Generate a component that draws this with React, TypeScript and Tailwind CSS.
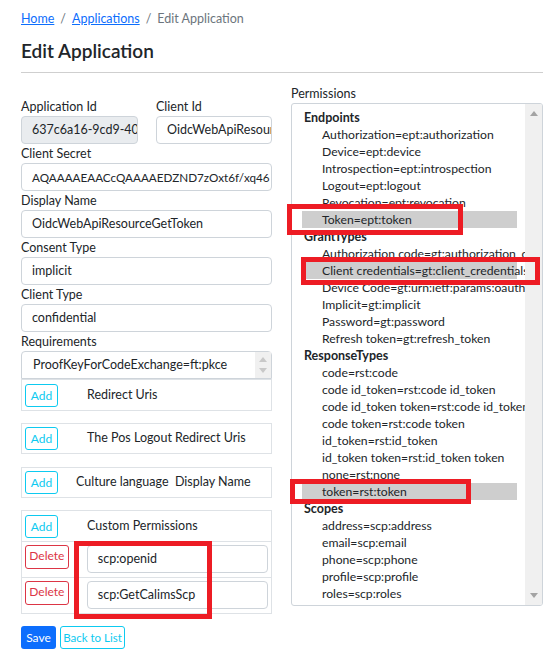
import React from "react";

const permissions: { group: string; items: { text: string; sel?: boolean }[] }[] = [
  {
    group: "Endpoints",
    items: [
      { text: "Authorization=ept:authorization" },
      { text: "Device=ept:device" },
      { text: "Introspection=ept:introspection" },
      { text: "Logout=ept:logout" },
      { text: "Revocation=ept:revocation" },
      { text: "Token=ept:token", sel: true },
    ],
  },
  {
    group: "GrantTypes",
    items: [
      { text: "Authorization code=gt:authorization_code" },
      { text: "Client credentials=gt:client_credentials", sel: true },
      { text: "Device Code=gt:urn:ietf:params:oauth:grant-type:device_code" },
      { text: "Implicit=gt:implicit" },
      { text: "Password=gt:password" },
      { text: "Refresh token=gt:refresh_token" },
    ],
  },
  {
    group: "ResponseTypes",
    items: [
      { text: "code=rst:code" },
      { text: "code id_token=rst:code id_token" },
      { text: "code id_token token=rst:code id_token token" },
      { text: "code token=rst:code token" },
      { text: "id_token=rst:id_token" },
      { text: "id_token token=rst:id_token token" },
      { text: "none=rst:none" },
      { text: "token=rst:token", sel: true },
    ],
  },
  {
    group: "Scopes",
    items: [
      { text: "address=scp:address" },
      { text: "email=scp:email" },
      { text: "phone=scp:phone" },
      { text: "profile=scp:profile" },
      { text: "roles=scp:roles" },
    ],
  },
];

function Field({ label, value, disabled, className, small }: { label: string; value: string; disabled?: boolean; className?: string; small?: boolean }) {
  return (
    <div className={className}>
      <div className="h-[19px] leading-[19px]">{label}</div>
      <div
        className={
          "h-[28px] border border-[#ced4da] rounded-[4px] pl-[10px] leading-[26px] overflow-hidden whitespace-nowrap " +
          (disabled ? "bg-[#e9ecef] " : "bg-white ") +
          (small ? "text-[11.7px]" : "")
        }
      >
        {value}
      </div>
    </div>
  );
}

function AddBtn() {
  return (
    <div className="w-[33px] h-[23px] border border-[#0dcaf0] rounded-[3px] text-[#0dcaf0] text-[12px] leading-[21px] text-center">
      Add
    </div>
  );
}

function DelBtn() {
  return (
    <div className="w-[44px] h-[24px] border border-[#dc3545] rounded-[3px] text-[#dc3545] text-[12px] leading-[20px] text-center">
      Delete
    </div>
  );
}

function Tri({ up, color }: { up?: boolean; color: string }) {
  return (
    <svg width="8" height="5" viewBox="0 0 8 5">
      <path d={up ? "M0 5 L4 0 L8 5 Z" : "M0 0 L8 0 L4 5 Z"} fill={color} />
    </svg>
  );
}

export default function App() {
  return (
    <div className="relative w-[543px] h-[652px] overflow-hidden bg-white text-[#212529] text-[12.5px] font-['Segoe_UI','Lato',sans-serif]">
      <div className="pl-[21px] pt-[10px]">
        {/* breadcrumb */}
        <div className="h-[17px] leading-[17px] flex items-center gap-[6px]">
          <span className="text-[#0d6efd] underline">Home</span>
          <span className="text-[#6c757d]">/</span>
          <span className="text-[#0d6efd] underline">Applications</span>
          <span className="text-[#6c757d]">/</span>
          <span className="text-[#6c757d]">Edit Application</span>
        </div>
        <div className="mt-[12px] h-[23px] leading-[23px] text-[19px] font-semibold">Edit Application</div>
        <div className="mt-[10px] h-px bg-[#cfcfcf]" />

        <div className="flex items-start gap-[19px]">
          {/* left column */}
          <div className="w-[251px] mt-[24px]">
            <div className="flex gap-[18px]">
              <Field className="w-[117px]" label="Application Id" value="637c6a16-9cd9-40" disabled />
              <Field className="w-[116px]" label="Client Id" value="OidcWebApiResourceGetToken" />
            </div>
            <Field label="Client Secret" value="AQAAAAEAACcQAAAAEDZND7zOxt6f/xq46" small />
            <Field label="Display Name" value="OidcWebApiResourceGetToken" />
            <Field label="Consent Type" value="implicit" />
            <Field label="Client Type" value="confidential" />
            <div>
              <div className="h-[19px] leading-[19px]">Requirements</div>
              <div className="h-[28px] border border-[#ced4da] rounded-t-[4px] flex">
                <div className="flex-1 pl-[11px] leading-[26px] whitespace-nowrap">ProofKeyForCodeExchange=ft:pkce</div>
                <div className="w-[16px] bg-[#f0f0f0] flex flex-col items-center justify-between py-[5px]">
                  <Tri up color="#c8c8c8" />
                  <Tri color="#c8c8c8" />
                </div>
              </div>
            </div>
            <div className="h-[32px] border border-[#dee2e6] flex items-center px-[3px]">
              <AddBtn />
              <span className="ml-[29px]">Redirect Uris</span>
            </div>
            <div className="mt-[12px] h-[31px] border border-[#dee2e6] flex items-center px-[3px]">
              <AddBtn />
              <span className="ml-[29px]">The Pos Logout Redirect Uris</span>
            </div>
            <div className="mt-[13px] h-[31px] border border-[#dee2e6] flex items-center px-[3px]">
              <AddBtn />
              <span className="ml-[18px] whitespace-pre">Culture language  Display Name</span>
            </div>
            <div className="mt-[12px] border border-[#dee2e6]">
              <div className="h-[31px] flex items-center px-[3px] border-b border-[#dee2e6]">
                <AddBtn />
                <span className="ml-[29px]">Custom Permissions</span>
              </div>
              <div className="h-[36px] flex items-start pt-[3px] px-[3px] border-b border-[#dee2e6]">
                <DelBtn />
                <div className="ml-[18px] w-[182px] h-[28px] border border-[#ced4da] rounded-[4px] pl-[10px] leading-[26px]">scp:openid</div>
              </div>
              <div className="h-[35px] flex items-start pt-[3px] px-[3px]">
                <DelBtn />
                <div className="ml-[18px] w-[182px] h-[28px] border border-[#ced4da] rounded-[4px] pl-[10px] leading-[26px]">scp:GetCalimsScp</div>
              </div>
            </div>
            <div className="mt-[12px] flex gap-[4px]">
              <div className="w-[35px] h-[23px] bg-[#0d6efd] rounded-[3px] text-white text-[12px] leading-[23px] text-center">Save</div>
              <div className="w-[65px] h-[23px] border border-[#0dcaf0] rounded-[3px] text-[#0dcaf0] text-[11.5px] leading-[21px] text-center">Back to List</div>
            </div>
          </div>

          {/* right column */}
          <div className="w-[252px] mt-[11px]">
            <div className="h-[19px] leading-[19px]">Permissions</div>
            <div className="h-[503px] border border-[#ced4da] rounded-[3px] flex overflow-hidden text-[12.2px]">
              <div className="flex-1 overflow-hidden pt-[5px] pl-[10px]">
                {permissions.map((g) => (
                  <div key={g.group}>
                    <div className="h-[17px] leading-[17px] font-bold pl-[2px] whitespace-nowrap text-[12.5px]">{g.group}</div>
                    {g.items.map((it) => (
                      <div
                        key={it.text}
                        className={
                          "h-[17px] leading-[17px] pl-[20px] whitespace-nowrap w-[215px] " +
                          (it.sel ? "bg-[#cecece]" : "")
                        }
                      >
                        {it.text}
                      </div>
                    ))}
                  </div>
                ))}
              </div>
              <div className="w-[17px] bg-[#f0f0f0] flex flex-col items-center justify-between py-[7px]">
                <Tri up color="#a3a3a3" />
                <Tri color="#a3a3a3" />
              </div>
            </div>
          </div>
        </div>
      </div>

      {/* red annotation boxes */}
      <div className="absolute left-[287px] top-[204px] w-[176px] h-[31px] border-[5px] border-[#ed1c24]" />
      <div className="absolute left-[301px] top-[257px] w-[239px] h-[28px] border-[5px] border-[#ed1c24]" />
      <div className="absolute left-[290px] top-[479px] w-[181px] h-[25px] border-[5px] border-[#ed1c24]" />
      <div className="absolute left-[74px] top-[541px] w-[138px] h-[78px] border-[5px] border-[#ed1c24]" />
    </div>
  );
}
